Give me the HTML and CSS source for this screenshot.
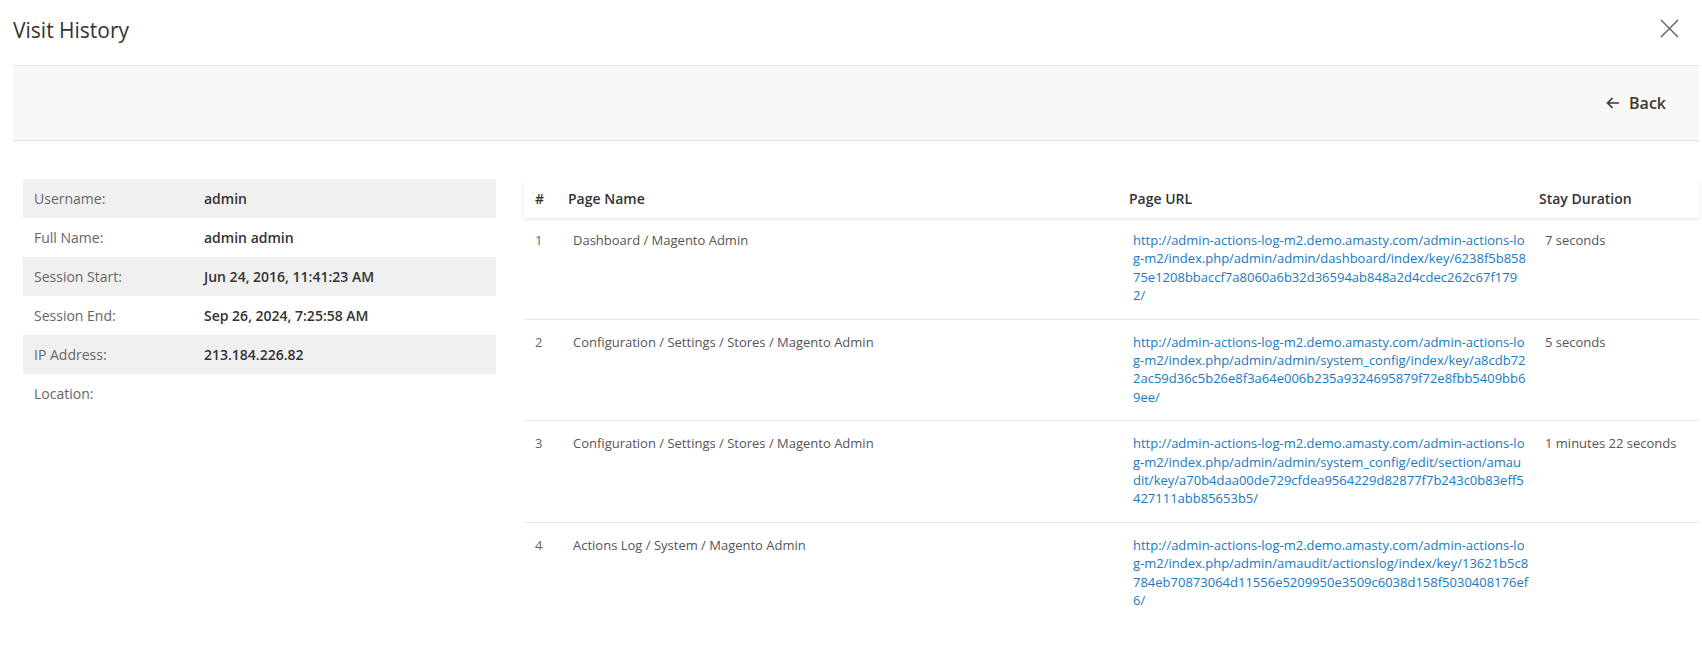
FILE: index.html
```html
<!DOCTYPE html>
<html lang="en">
<head>
<meta charset="utf-8">
<title>Visit History</title>
<link rel="stylesheet" href="styles.css">
</head>
<body>
<div class="modal">
  <header class="modal-header">
    <h1 class="modal-title">Visit History</h1>
    <button class="close" type="button" aria-label="Close">
      <svg width="19" height="19" viewBox="0 0 19 19"><path d="M1 1 L18 18 M18 1 L1 18" stroke="#666" stroke-width="1.5" fill="none"/></svg>
    </button>
  </header>
  <div class="toolbar">
    <button class="back" type="button">
      <svg width="14" height="12" viewBox="0 0 14 12"><path d="M13 6 H1.5 M6.5 1 L1.5 6 L6.5 11" stroke="#41362f" stroke-width="1.7" fill="none"/></svg>
      <span>Back</span>
    </button>
  </div>
  <div class="content">
    <div class="info">
      <div class="info-row"><span class="label">Username:</span><span class="value">admin</span></div>
      <div class="info-row"><span class="label">Full Name:</span><span class="value">admin admin</span></div>
      <div class="info-row"><span class="label">Session Start:</span><span class="value">Jun 24, 2016, 11:41:23 AM</span></div>
      <div class="info-row"><span class="label">Session End:</span><span class="value">Sep 26, 2024, 7:25:58 AM</span></div>
      <div class="info-row"><span class="label">IP Address:</span><span class="value">213.184.226.82</span></div>
      <div class="info-row"><span class="label">Location:</span><span class="value"></span></div>
    </div>
    <table class="visits">
      <colgroup>
        <col class="c-num"><col class="c-name"><col class="c-url"><col class="c-dur">
      </colgroup>
      <thead>
        <tr><th>#</th><th>Page Name</th><th>Page URL</th><th class="h-dur">Stay Duration</th></tr>
      </thead>
      <tbody>
        <tr>
          <td class="num">1</td>
          <td class="name">Dashboard / Magento Admin</td>
          <td class="url"><a href="#">http://admin-actions-log-m2.demo.amasty.com/admin-actions-log-m2/index.php/admin/admin/dashboard/index/key/6238f5b85875e1208bbaccf7a8060a6b32d36594ab848a2d4cdec262c67f1792/</a></td>
          <td class="dur">7 seconds</td>
        </tr>
        <tr>
          <td class="num">2</td>
          <td class="name">Configuration / Settings / Stores / Magento Admin</td>
          <td class="url"><a href="#">http://admin-actions-log-m2.demo.amasty.com/admin-actions-log-m2/index.php/admin/admin/system_config/index/key/a8cdb722ac59d36c5b26e8f3a64e006b235a9324695879f72e8fbb5409bb69ee/</a></td>
          <td class="dur">5 seconds</td>
        </tr>
        <tr>
          <td class="num">3</td>
          <td class="name">Configuration / Settings / Stores / Magento Admin</td>
          <td class="url"><a href="#">http://admin-actions-log-m2.demo.amasty.com/admin-actions-log-m2/index.php/admin/admin/system_config/edit/section/amaudit/key/a70b4daa00de729cfdea9564229d82877f7b243c0b83eff5427111abb85653b5/</a></td>
          <td class="dur">1 minutes 22 seconds</td>
        </tr>
        <tr>
          <td class="num">4</td>
          <td class="name">Actions Log / System / Magento Admin</td>
          <td class="url"><a href="#">http://admin-actions-log-m2.demo.amasty.com/admin-actions-log-m2/index.php/admin/amaudit/actionslog/index/key/13621b5c8784eb70873064d11556e5209950e3509c6038d158f5030408176ef6/</a></td>
          <td class="dur"></td>
        </tr>
      </tbody>
    </table>
  </div>
</div>
</body>
</html>
```

FILE: styles.css
```css
* { box-sizing: border-box; }
html, body {
  margin: 0;
  padding: 0;
  background: #fff;
  font-family: "Open Sans", "Liberation Sans", sans-serif;
  color: #333;
}
.modal {
  padding: 0 3px 0 13px;
}
.modal-header {
  height: 65px;
  display: flex;
  align-items: flex-start;
  justify-content: space-between;
  padding-top: 15px;
}
.modal-title {
  margin: 0;
  font-size: 21px;
  font-weight: 400;
  line-height: 30px;
  color: #333;
}
.close {
  border: 0;
  background: none;
  padding: 0;
  margin: 4px 20px 0 0;
  width: 19px;
  height: 19px;
  display: flex;
  cursor: pointer;
}
.toolbar {
  height: 76px;
  background: #f8f8f8;
  border-top: 1px solid #e3e3e3;
  border-bottom: 1px solid #e3e3e3;
  display: flex;
  align-items: center;
  justify-content: flex-end;
  padding-right: 33px;
}
.back {
  border: 0;
  background: none;
  padding: 0;
  display: flex;
  align-items: center;
  gap: 9px;
  font-family: inherit;
  font-size: 16px;
  font-weight: 600;
  color: #41362f;
  cursor: pointer;
}
.content {
  display: flex;
  align-items: flex-start;
  gap: 28px;
  padding: 38px 0 0 10px;
}
.info {
  width: 473px;
  flex: none;
}
.info-row {
  display: grid;
  grid-template-columns: 170px 1fr;
  height: 39px;
  align-items: center;
  padding: 0 11px;
  font-size: 14px;
}
.info-row:nth-child(odd) {
  background: #f0f0f0;
}
.label {
  color: #666;
}
.value {
  color: #333;
  font-weight: 600;
}
.visits {
  flex: none;
  width: 1175px;
  table-layout: fixed;
  border-collapse: collapse;
  font-size: 13px;
}
.c-num { width: 33px; }
.c-name { width: 561px; }
.c-url { width: 411.5px; }
.c-dur { width: 169.5px; }
.visits thead tr {
  box-shadow: 0 2px 4px rgba(0, 0, 0, 0.09);
}
.visits th {
  text-align: left;
  font-size: 14px;
  font-weight: 600;
  color: #333;
  padding: 10px 11px;
  line-height: 19px;
}
.visits th.h-dur {
  padding-left: 9.5px;
}
.visits td {
  vertical-align: top;
  padding: 13px 10px 14px 16px;
  color: #555;
  line-height: 18.4px;
  border-bottom: 1px solid #e8e8e8;
}
.visits tbody tr:last-child td {
  border-bottom: 0;
}
.visits td.num {
  padding-left: 11px;
  color: #666;
}
.visits td.url {
  padding: 13px 1px 14px 15px;
  word-break: break-all;
}
.visits td.url a {
  color: #1979c3;
  text-decoration: none;
}
.visits td.dur {
  padding-left: 15.5px;
  padding-right: 2px;
}
```
